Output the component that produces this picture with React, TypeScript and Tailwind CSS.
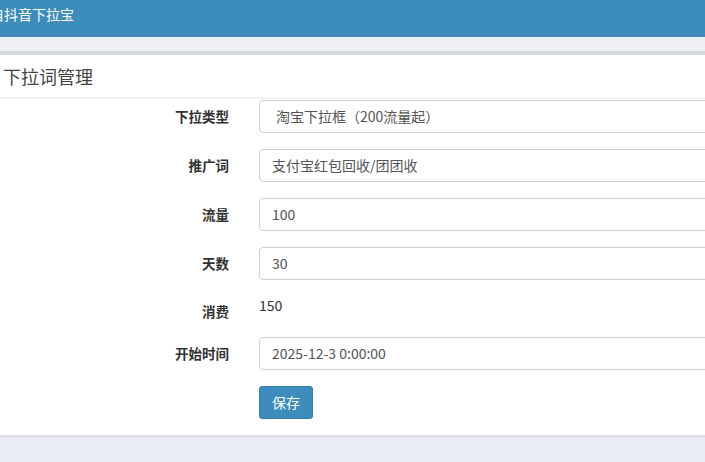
import React from "react";

const font = { fontFamily: '"Noto Sans CJK SC", "Noto Sans", sans-serif' };

function Row({ label, children, h = "h-[33px]" }: { label: string; children: React.ReactNode; h?: string }) {
  return (
    <div className={`flex ${h}`}>
      <div className="w-[229px] shrink-0 flex items-center justify-end text-[13.5px] font-bold text-[#333]">{label}</div>
      <div className="w-[30px] shrink-0" />
      <div className="flex-1 min-w-0">{children}</div>
    </div>
  );
}

function Input({ value, pl = "pl-[12px]" }: { value: string; pl?: string }) {
  return (
    <div className={`h-[33px] w-[470px] border border-[#cfcfcf] rounded-[4px] flex items-center ${pl} text-[14px] text-[#555] bg-white whitespace-pre`}>
      {value}
    </div>
  );
}

export default function App() {
  return (
    <div className="w-[705px] h-[462px] overflow-hidden bg-[#e9edf3]" style={font}>
      <div className="h-[34px] bg-[#3c8dbc] flex items-center text-white text-[14px] pb-[5px]">
        <span className="ml-[-10px] whitespace-nowrap">自抖音下拉宝</span>
      </div>
      <div className="h-[3px] bg-[#4286bd]" />
      <div className="h-px bg-[#e4f6f8]" />
      <div className="h-[13px] bg-[#eeeef5]" />
      <div className="h-[4px] bg-[#d5d8dd]" />
      <div className="h-[382px] bg-white border-b-2 border-[#dcdcdc]">
        <div className="h-[44px] flex items-center pl-[3px] pt-[1px] text-[18px] text-[#444] border-b-2 border-[#f2f2f2]">
          下拉词管理
        </div>
        <div className="flex flex-col gap-[16px] pt-[1px]">
          <Row label="下拉类型">
            <Input value="淘宝下拉框（200流量起）" pl="pl-[16px]" />
          </Row>
          <Row label="推广词">
            <Input value="支付宝红包回收/团团收" />
          </Row>
          <Row label="流量">
            <Input value="100" />
          </Row>
          <Row label="天数">
            <Input value="30" />
          </Row>
          <div className="flex h-[25px]">
            <div className="w-[229px] shrink-0 flex items-end justify-end text-[13.5px] font-bold text-[#333] leading-[20px]">消费</div>
            <div className="w-[30px] shrink-0" />
            <div className="text-[14px] text-[#333] leading-[20px] mt-[-1px]">150</div>
          </div>
          <Row label="开始时间">
            <Input value="2025-12-3 0:00:00" />
          </Row>
          <Row label="">
            <button className="h-[33px] w-[54px] rounded-[3px] bg-[#3c8dbc] border border-[#367fa9] text-white text-[14px] flex items-center justify-center">
              保存
            </button>
          </Row>
        </div>
      </div>
    </div>
  );
}
